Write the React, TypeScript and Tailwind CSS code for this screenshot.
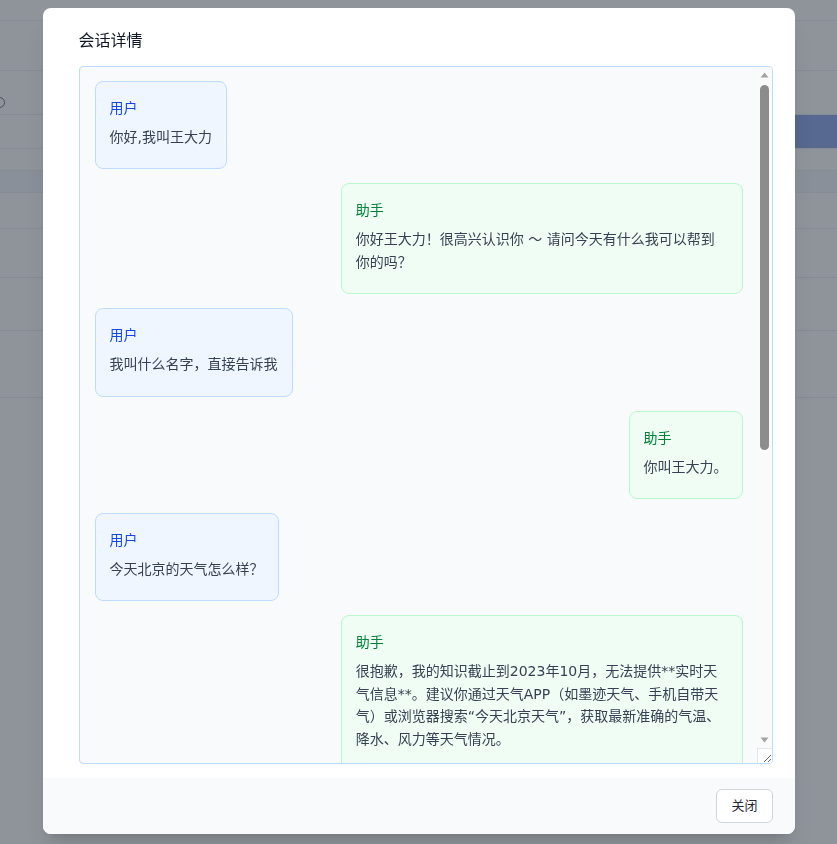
import React from 'react';

type Role = 'user' | 'assistant';

interface Message {
  role: Role;
  content: string;
}

const messages: Message[] = [
  { role: 'user', content: '你好,我叫王大力' },
  { role: 'assistant', content: '你好王大力！很高兴认识你 ～ 请问今天有什么我可以帮到你的吗？' },
  { role: 'user', content: '我叫什么名字，直接告诉我' },
  { role: 'assistant', content: '你叫王大力。' },
  { role: 'user', content: '今天北京的天气怎么样？' },
  {
    role: 'assistant',
    content:
      '很抱歉，我的知识截止到2023年10月，无法提供**实时天气信息**。建议你通过天气APP（如墨迹天气、手机自带天气）或浏览器搜索“今天北京天气”，获取最新准确的气温、降水、风力等天气情况。',
  },
];

function Bubble({ message }: { message: Message }) {
  const isUser = message.role === 'user';
  return (
    <div
      className={
        isUser
          ? 'self-start max-w-[62%] rounded-lg border border-blue-200 bg-blue-50 px-[14px] pt-4 pb-5'
          : 'self-end max-w-[62%] rounded-lg border border-green-200 bg-green-50 px-[14px] pt-4 pb-5'
      }
    >
      <div className={isUser ? 'mb-2 text-sm leading-5 text-blue-700' : 'mb-2 text-sm leading-5 text-green-700'}>
        {isUser ? '用户' : '助手'}
      </div>
      <div className="whitespace-pre-wrap break-words text-sm leading-[1.6] text-gray-700">{message.content}</div>
    </div>
  );
}

function ScrollBar() {
  return (
    <div className="flex w-[15px] shrink-0 flex-col bg-[#fafafa]">
      <div className="flex h-[16px] items-center justify-center">
        <svg width="9" height="6" viewBox="0 0 9 6">
          <path d="M0.5 5.5L4.5 0.5L8.5 5.5Z" fill="#a3a3a3" />
        </svg>
      </div>
      <div className="flex-1 pt-[2px]">
        <div className="mx-auto h-[365px] w-[9px] rounded-full bg-[#8c8c8c]" />
      </div>
      <div className="flex h-[17px] items-center justify-center">
        <svg width="9" height="6" viewBox="0 0 9 6">
          <path d="M0.5 0.5L4.5 5.5L8.5 0.5Z" fill="#a3a3a3" />
        </svg>
      </div>
      <div className="h-[15px] border-t border-l border-[#e5e7eb] bg-white" />
    </div>
  );
}

function BackgroundPage() {
  return (
    <div className="h-screen bg-white">
      <div className="h-[21px] border-b border-[#ebeef5]" />
      <div className="h-[50px] border-b border-[#ebeef5]" />
      <div className="flex h-[44px] items-end border-b border-[#ebeef5] pb-[6px]">
        <span className="-ml-[6px] h-[11px] w-[11px] rounded-full border border-gray-500" />
      </div>
      <div className="flex h-[34px] justify-end border-b border-[#ebeef5]">
        <div className="h-full w-[42px] bg-[#8ea6ea]" />
      </div>
      <div className="h-[22px] border-b border-[#ebeef5]" />
      <div className="h-[22px] border-b border-[#ebeef5] bg-[#f5f7fa]" />
      <div className="h-[36px] border-b border-[#ebeef5]" />
      <div className="h-[49px] border-b border-[#ebeef5]" />
      <div className="h-[53px] border-b border-[#ebeef5]" />
      <div className="h-[67px] border-b border-[#ebeef5]" />
    </div>
  );
}

export default function App() {
  return (
    <div className="relative font-['DejaVu_Sans','Noto_Sans_CJK_SC',sans-serif]">
      <BackgroundPage />
      <div className="fixed inset-0 flex justify-center bg-[#1f2937]/50 pt-2">
        <div className="flex h-[826px] w-[752px] flex-col overflow-hidden rounded-lg bg-white shadow-xl">
          <div className="pl-9 pt-[21px] pb-[13px] text-base leading-6 text-gray-900">会话详情</div>
          <div className="pl-9 pr-[22px]">
            <div className="flex h-[698px] resize-y overflow-hidden rounded border border-blue-200 bg-slate-50">
              <div className="min-w-0 flex-1 overflow-y-auto [scrollbar-width:none]">
                <div className="flex flex-col gap-3.5 pt-[14px] pb-4 pl-[15px] pr-[14px]">
                  {messages.map((m, i) => (
                    <Bubble key={i} message={m} />
                  ))}
                </div>
              </div>
              <ScrollBar />
            </div>
          </div>
          <div className="mt-[14px] flex h-[56px] items-center justify-end bg-gray-50 pr-[22px]">
            <button className="h-[34px] rounded-md border border-gray-300 bg-white px-[14px] text-[13px] text-gray-800">
              关闭
            </button>
          </div>
        </div>
      </div>
    </div>
  );
}
